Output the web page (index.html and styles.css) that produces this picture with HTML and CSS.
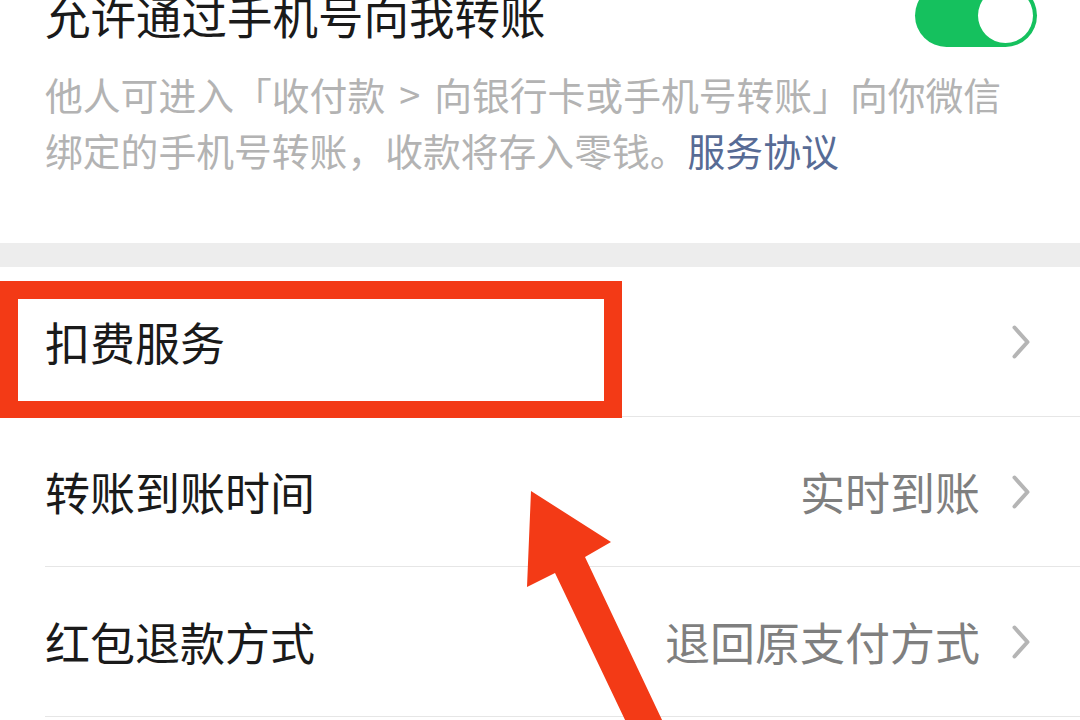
FILE: index.html
```html
<!DOCTYPE html>
<html lang="zh-CN">
<head>
<meta charset="utf-8">
<link rel="stylesheet" href="styles.css">
</head>
<body>
<div class="page">
  <section class="intro">
    <div class="title-row">
      <div class="title">允许通过手机号向我转账</div>
      <div class="switch"><div class="knob"></div></div>
    </div>
    <p class="desc">他人可进入「收付款<span class="gt">&gt;</span>向银行卡或手机号转账」向你微信<br>绑定的手机号转账，收款将存入零钱。<span class="link">服务协议</span></p>
  </section>
  <div class="gap"></div>
  <section class="list">
    <div class="row">
      <div class="label">扣费服务</div>
      <div class="right">
        <svg class="chev" width="18" height="34" viewBox="0 0 18 34"><polyline points="2.5,2.5 15.5,17 2.5,31.5" fill="none" stroke="#b5b5b5" stroke-width="4" stroke-linecap="round" stroke-linejoin="round"/></svg>
      </div>
    </div>
    <div class="row">
      <div class="label">转账到账时间</div>
      <div class="right">
        <span class="value">实时到账</span>
        <svg class="chev" width="18" height="34" viewBox="0 0 18 34"><polyline points="2.5,2.5 15.5,17 2.5,31.5" fill="none" stroke="#b5b5b5" stroke-width="4" stroke-linecap="round" stroke-linejoin="round"/></svg>
      </div>
    </div>
    <div class="row">
      <div class="label">红包退款方式</div>
      <div class="right">
        <span class="value">退回原支付方式</span>
        <svg class="chev" width="18" height="34" viewBox="0 0 18 34"><polyline points="2.5,2.5 15.5,17 2.5,31.5" fill="none" stroke="#b5b5b5" stroke-width="4" stroke-linecap="round" stroke-linejoin="round"/></svg>
      </div>
    </div>
  </section>
  <div class="highlight"></div>
  <svg class="arrow" width="1080" height="720" viewBox="0 0 1080 720">
    <polygon points="531,491 611,542 585,557 663,722 626,722 555,573 527,587" fill="#f33a16"/>
  </svg>
</div>
</body>
</html>
```

FILE: styles.css
```css
* { box-sizing: border-box; }
html, body {
  margin: 0;
  padding: 0;
  width: 1080px;
  height: 720px;
  overflow: hidden;
  background: #ffffff;
}
body {
  font-family: "Noto Sans CJK SC", "Noto Sans", sans-serif;
}
.page {
  position: relative;
  width: 1080px;
  height: 720px;
  overflow: hidden;
}
.intro {
  margin-top: -16px;
  padding: 0 43px 0 45px;
  height: 259px;
}
.title-row {
  display: flex;
  justify-content: space-between;
  align-items: center;
  height: 63px;
}
.title {
  font-size: 45.5px;
  color: #1a1a1a;
  line-height: 63px;
}
.switch {
  width: 122px;
  height: 63px;
  border-radius: 32px;
  background: #15c15e;
  display: flex;
  justify-content: flex-end;
  align-items: center;
  padding-right: 4px;
}
.knob {
  width: 55px;
  height: 55px;
  border-radius: 50%;
  background: #ffffff;
}
.desc {
  margin: 19px 0 0 0;
  font-size: 37.8px;
  line-height: 56px;
  color: #b3b3b3;
  white-space: nowrap;
}
.gt {
  margin: 0 14px;
}
.link {
  color: #576b95;
}
.gap {
  height: 24px;
  background: #ededed;
}
.list {
  background: #ffffff;
}
.row {
  margin-left: 45px;
  height: 150px;
  border-bottom: 1.5px solid #e6e6e6;
  display: flex;
  justify-content: space-between;
  align-items: center;
  padding-right: 50px;
}
.label {
  font-size: 45px;
  color: #1a1a1a;
}
.right {
  display: flex;
  align-items: center;
  gap: 32px;
}
.value {
  font-size: 45px;
  color: #7f7f7f;
}
.chev {
  display: block;
}
.highlight {
  position: absolute;
  left: 0;
  top: 281px;
  width: 622px;
  height: 137px;
  border: 18px solid #f33a16;
  border-bottom-width: 17px;
}
.arrow {
  position: absolute;
  left: 0;
  top: 0;
}
```
